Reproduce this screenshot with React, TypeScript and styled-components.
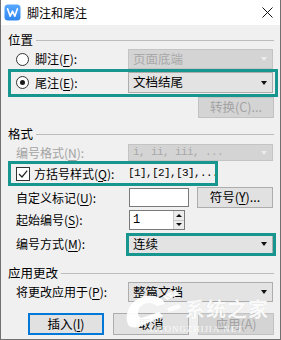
import React from 'react';
import styled, { createGlobalStyle, css } from 'styled-components';

const GlobalStyle = createGlobalStyle`
  html, body { margin: 0; padding: 0; background: #f0f0f0; }
  * { box-sizing: border-box; }
`;

const TEAL = '#16968f';
const FONT = `"Noto Sans CJK SC", "Noto Sans", sans-serif`;
const MONO = `"Liberation Mono", "DejaVu Sans Mono", monospace`;

type Insets = { t: number; r: number; b: number; l: number };

const highlight = (hl?: Insets) =>
  hl
    ? css`
        position: relative;
        &::after {
          content: '';
          position: absolute;
          top: ${hl.t}px;
          right: ${hl.r}px;
          bottom: ${hl.b}px;
          left: ${hl.l}px;
          border: 3px solid ${TEAL};
          pointer-events: none;
        }
      `
    : '';

const Window = styled.div`
  position: relative;
  width: 281px;
  height: 340px;
  background: #f0f0f0;
  border: 1px solid #707070;
  border-top: none;
  font-family: ${FONT};
  font-size: 12px;
  color: #000;
  overflow: hidden;
`;

const TitleBar = styled.div`
  height: 25px;
  background: #fff;
  display: flex;
  align-items: center;
  padding-left: 3px;
  padding-right: 7px;
`;

const TitleText = styled.span`
  margin-left: 6px;
  font-size: 12px;
  line-height: 1;
  flex: 1;
`;

const Content = styled.div`
  padding: 0 6px 0 7px;
  display: flex;
  flex-direction: column;
`;

const Heading = styled.div<{ $mt: number }>`
  margin-top: ${(p) => p.$mt}px;
  height: 16px;
  display: flex;
  align-items: center;
  gap: 3px;
  font-size: 12.5px;
  line-height: 1;
  &::after {
    content: '';
    flex: 1;
    height: 1px;
    background: #bcbcbc;
  }
`;

const Row = styled.div<{ $mt: number; $h: number; $hl?: Insets }>`
  margin-top: ${(p) => p.$mt}px;
  height: ${(p) => p.$h}px;
  display: flex;
  align-items: center;
  ${(p) => highlight(p.$hl)}
`;

const LabelCell = styled.div<{ $indent: number; $disabled?: boolean }>`
  width: 120px;
  flex: none;
  padding-left: ${(p) => p.$indent}px;
  display: flex;
  align-items: center;
  line-height: 1;
  white-space: nowrap;
  color: ${(p) => (p.$disabled ? '#a3a3a3' : '#000')};
  u { text-decoration-thickness: 1px; text-underline-offset: 2px; }
`;

const RadioCircle = styled.span<{ $checked?: boolean }>`
  width: 13px;
  height: 13px;
  border-radius: 50%;
  border: 1px solid #333;
  background: #fff;
  margin-right: 6px;
  display: flex;
  align-items: center;
  justify-content: center;
  flex: none;
  &::after {
    content: '';
    width: 5px;
    height: 5px;
    border-radius: 50%;
    background: ${(p) => (p.$checked ? '#1a1a1a' : 'transparent')};
  }
`;

const CheckBox = styled.span`
  width: 14px;
  height: 14px;
  border: 1px solid #333;
  background: #fff;
  margin-right: 4px;
  display: flex;
  align-items: center;
  justify-content: center;
  flex: none;
`;

const Combo = styled.div<{ $h: number; $disabled?: boolean; $hl?: Insets }>`
  width: 145px;
  height: ${(p) => p.$h}px;
  flex: none;
  border: 1px solid ${(p) => (p.$disabled ? '#c4c4c4' : '#adadad')};
  background: ${(p) => (p.$disabled ? '#d4d4d4' : '#e3e3e3')};
  color: ${(p) => (p.$disabled ? '#a8a8a8' : '#000')};
  display: flex;
  align-items: center;
  justify-content: space-between;
  padding: 0 3px 0 4px;
  line-height: 1;
  white-space: nowrap;
  ${(p) => highlight(p.$hl)}
`;

const ComboText = styled.span<{ $mono?: boolean }>`
  font-family: ${(p) => (p.$mono ? MONO : FONT)};
  font-size: ${(p) => (p.$mono ? '11px' : '12.5px')};
  letter-spacing: ${(p) => (p.$mono ? '-0.6px' : '0')};
`;

const Arrow = styled.span<{ $disabled?: boolean }>`
  width: 0;
  height: 0;
  border-left: 3.5px solid transparent;
  border-right: 3.5px solid transparent;
  border-top: 4px solid ${(p) => (p.$disabled ? '#ececec' : '#111')};
  margin-right: 2px;
`;

const Button = styled.div<{ $disabled?: boolean; $focused?: boolean; $h?: number }>`
  width: 76px;
  height: ${(p) => p.$h ?? 21}px;
  flex: none;
  border: 1px solid ${(p) => (p.$focused ? '#0078d7' : p.$disabled ? '#c2c2c2' : '#adadad')};
  box-shadow: ${(p) => (p.$focused ? 'inset 0 0 0 1px #0078d7' : 'none')};
  background: ${(p) => (p.$disabled ? '#d4d4d4' : '#e1e1e1')};
  color: ${(p) => (p.$disabled ? '#a3a3a3' : '#000')};
  display: flex;
  align-items: center;
  justify-content: center;
  line-height: 1;
  font-size: 12.5px;
  white-space: nowrap;
  u { text-decoration-thickness: 1px; text-underline-offset: 2px; }
`;

const ControlGap = styled.div`
  width: 8px;
  flex: none;
`;

const RightAlign = styled.div`
  flex: 1;
  display: flex;
  justify-content: flex-end;
`;

const BracketText = styled.span`
  font-family: ${MONO};
  font-size: 11px;
  letter-spacing: -0.6px;
  line-height: 1;
  white-space: nowrap;
`;

const TextInput = styled.div<{ $w: number; $h: number }>`
  width: ${(p) => p.$w}px;
  height: ${(p) => p.$h}px;
  margin-left: 1px;
  flex: none;
  background: #fff;
  border: 1px solid #7a7a7a;
  display: flex;
  align-items: center;
`;

const SpinValue = styled.span`
  flex: 1;
  padding-left: 3px;
  font-family: ${MONO};
  font-size: 12px;
  line-height: 1;
`;

const SpinButtons = styled.div`
  width: 11px;
  height: 100%;
  display: flex;
  flex-direction: column;
  border-left: 1px solid #c8c8c8;
`;

const SpinHalf = styled.div<{ $up?: boolean }>`
  flex: 1;
  background: #ececec;
  display: flex;
  align-items: center;
  justify-content: center;
  border-bottom: ${(p) => (p.$up ? '1px solid #c8c8c8' : 'none')};
  &::after {
    content: '';
    width: 0;
    height: 0;
    border-left: 3px solid transparent;
    border-right: 3px solid transparent;
    ${(p) => (p.$up ? 'border-bottom: 3px solid #111;' : 'border-top: 3px solid #111;')}
  }
`;

const ButtonBar = styled.div`
  margin-top: 11px;
  height: 22px;
  display: flex;
  justify-content: flex-end;
  gap: 9px;
`;

const Watermark = styled.div`
  position: absolute;
  left: 118px;
  top: 286px;
  width: 162px;
  height: 52px;
  pointer-events: none;
`;

const WmTitle = styled.span`
  position: absolute;
  left: 66px;
  top: 13px;
  font-family: ${FONT};
  font-weight: 700;
  font-size: 20px;
  letter-spacing: 1px;
  color: rgba(255, 255, 255, 0.93);
  text-shadow: 0 0 1px rgba(0, 0, 0, 0.12);
  line-height: 1;
  white-space: nowrap;
`;

const WmSub = styled.span`
  position: absolute;
  left: 28px;
  top: 39px;
  font-family: "Liberation Serif", serif;
  font-size: 9px;
  color: rgba(255, 255, 255, 0.9);
  line-height: 1;
  letter-spacing: 0.9px;
  white-space: nowrap;
`;

const WmLogo = styled.svg`
  position: absolute;
  left: 0;
  top: 0;
`;

const U = ({ c }: { c: string }) => <u>{c}</u>;

export default function App() {
  return (
    <>
      <GlobalStyle />
      <Window>
        <TitleBar>
          <svg width="17" height="17" viewBox="0 0 17 17">
            <defs>
              <linearGradient id="wg" x1="0" y1="0" x2="0" y2="1">
                <stop offset="0" stopColor="#58a8ff" />
                <stop offset="1" stopColor="#2f86ee" />
              </linearGradient>
            </defs>
            <rect x="0.5" y="0.5" width="16" height="16" rx="3.5" fill="url(#wg)" />
            <path d="M3.6 4.8 L6.2 12.2 L8.5 7.2 L10.8 12.2 L13.4 4.8" fill="none" stroke="#fff" strokeWidth="1.6" strokeLinejoin="round" strokeLinecap="round" />
          </svg>
          <TitleText>脚注和尾注</TitleText>
          <svg width="11" height="11" viewBox="0 0 11 11">
            <path d="M0.5 0.5 L10.5 10.5 M10.5 0.5 L0.5 10.5" stroke="#111" strokeWidth="1" />
          </svg>
        </TitleBar>
        <Content>
          <Heading $mt={7}>位置</Heading>
          <Row $mt={1} $h={20}>
            <LabelCell $indent={8}>
              <RadioCircle />
              脚注(<U c="F" />):
            </LabelCell>
            <Combo $h={20} $disabled>
              <ComboText>页面底端</ComboText>
              <Arrow $disabled />
            </Combo>
          </Row>
          <Row $mt={3} $h={21} $hl={{ t: -3, r: -4, b: -4, l: 0 }}>
            <LabelCell $indent={8}>
              <RadioCircle $checked />
              尾注(<U c="E" />):
            </LabelCell>
            <Combo $h={21}>
              <ComboText>文档结尾</ComboText>
              <Arrow />
            </Combo>
          </Row>
          <Row $mt={4} $h={21}>
            <RightAlign>
              <Button $disabled>转换(C)...</Button>
            </RightAlign>
          </Row>

          <Heading $mt={8}>格式</Heading>
          <Row $mt={2} $h={17}>
            <LabelCell $indent={8} $disabled>
              编号格式(<U c="N" />):
            </LabelCell>
            <Combo $h={17} $disabled>
              <ComboText $mono>i, ii, iii, ...</ComboText>
              <Arrow $disabled />
            </Combo>
          </Row>
          <Row $mt={3} $h={19} $hl={{ t: -3, r: 56, b: -3, l: 0 }}>
            <LabelCell $indent={8}>
              <CheckBox>
                <svg width="10" height="10" viewBox="0 0 10 10">
                  <path d="M1 5 L4 8 L9.2 1.6" fill="none" stroke="#222" strokeWidth="1.2" />
                </svg>
              </CheckBox>
              方括号样式(<U c="Q" />):
            </LabelCell>
            <BracketText>[1],[2],[3],...</BracketText>
          </Row>
          <Row $mt={4} $h={21}>
            <LabelCell $indent={8}>
              自定义标记(<U c="U" />):
            </LabelCell>
            <TextInput $w={60} $h={19} />
            <ControlGap />
            <Button>符号(<U c="Y" />)...</Button>
          </Row>
          <Row $mt={2} $h={20}>
            <LabelCell $indent={8}>
              起始编号(<U c="S" />):
            </LabelCell>
            <TextInput $w={56} $h={20}>
              <SpinValue>1</SpinValue>
              <SpinButtons>
                <SpinHalf $up />
                <SpinHalf />
              </SpinButtons>
            </TextInput>
          </Row>
          <Row $mt={4} $h={20}>
            <LabelCell $indent={8}>
              编号方式(<U c="M" />):
            </LabelCell>
            <Combo $h={19} $hl={{ t: -3, r: -4, b: -3, l: -3 }}>
              <ComboText>连续</ComboText>
              <Arrow />
            </Combo>
          </Row>

          <Heading $mt={11}>应用更改</Heading>
          <Row $mt={1} $h={20}>
            <LabelCell $indent={8}>
              将更改应用于(<U c="P" />):
            </LabelCell>
            <Combo $h={20}>
              <ComboText>整篇文档</ComboText>
              <Arrow />
            </Combo>
          </Row>
          <ButtonBar>
            <Button $focused $h={22}>
              插入(<U c="I" />)
            </Button>
            <Button $h={22}>取消</Button>
            <Button $disabled $h={22}>
              应用(A)
            </Button>
          </ButtonBar>
        </Content>
        <Watermark>
          <WmLogo width="64" height="52" viewBox="0 0 64 52">
            <path
              d="M10 40 C4 30 10 14 26 10 C36 8 44 12 46 18 L38 20 C34 16 26 16 22 20 C18 24 18 30 22 32 L40 26 L44 30 L22 40 C18 42 14 42 10 40 Z"
              fill="rgba(255,255,255,0.95)"
            />
            <path d="M44 10 L56 4 L60 8 L48 14 Z" fill="rgba(255,255,255,0.9)" />
            <path d="M48 22 L60 18 L62 22 L50 26 Z" fill="rgba(255,255,255,0.85)" />
          </WmLogo>
          <WmTitle>系统之家</WmTitle>
          <WmSub>XITONGZHIJIA.NET</WmSub>
        </Watermark>
      </Window>
    </>
  );
}
